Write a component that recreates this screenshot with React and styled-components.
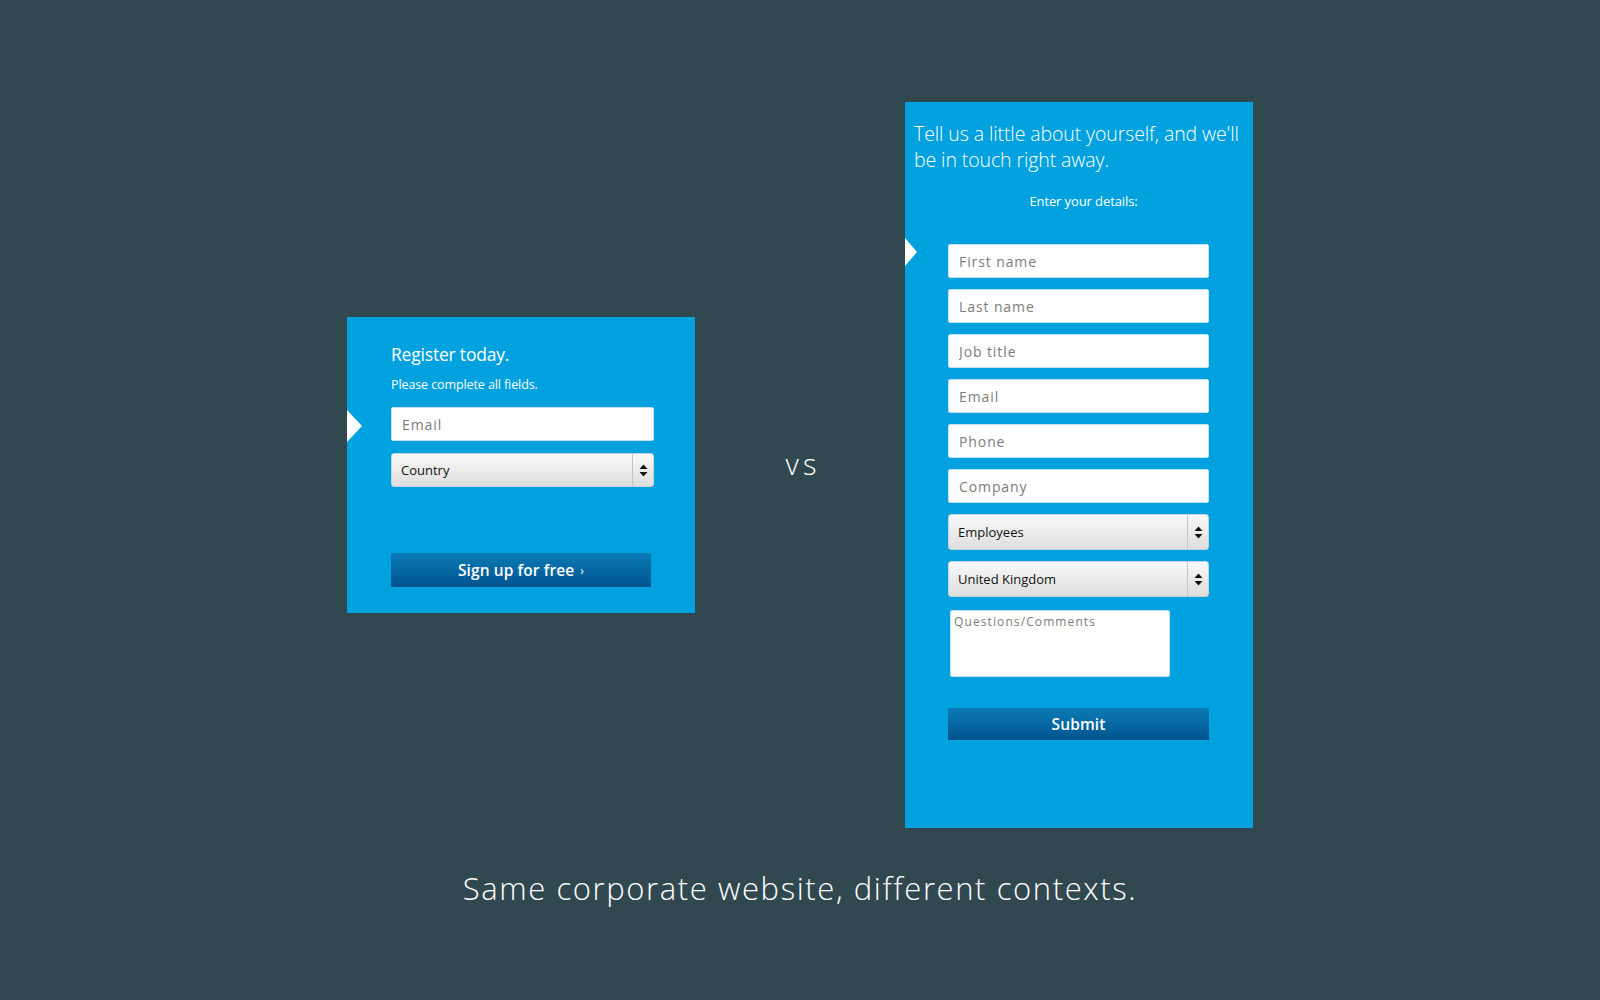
import React from "react";
import styled, { createGlobalStyle } from "styled-components";

const Global = createGlobalStyle`
  html, body { margin: 0; padding: 0; background: #324851; }
  body { font-family: "Open Sans", "Liberation Sans", sans-serif; }
  * { box-sizing: border-box; }
`;

const Page = styled.div`
  width: 1600px;
  height: 1000px;
  background: #324851;
  display: flex;
  flex-direction: column;
  align-items: center;
  padding-top: 102px;
`;

const Stage = styled.div`
  display: grid;
  grid-template-columns: 348px 210px 348px;
  align-items: center;
  height: 726px;
`;

const Panel = styled.div`
  position: relative;
  background: #00a1df;
  width: 348px;
  height: ${(p) => p.$h}px;
  padding: ${(p) => p.$pad};
  display: flex;
  flex-direction: column;
  color: #fff;
`;

const Pointer = styled.div`
  position: absolute;
  left: 0;
  top: ${(p) => p.$top}px;
  width: 0;
  height: 0;
  border-top: ${(p) => p.$h / 2}px solid transparent;
  border-bottom: ${(p) => p.$h / 2}px solid transparent;
  border-left: ${(p) => p.$w}px solid #fff;
`;

const Versus = styled.div`
  justify-self: center;
  font-family: "Open Sans", sans-serif;
  font-weight: 300;
  font-size: 29px;
  letter-spacing: 4px;
  color: #fff;
  padding: 0 0 4px 6px;
`;

const Title = styled.h2`
  margin: 0;
  font-weight: 400;
  font-size: 17.5px;
  line-height: 24px;
  letter-spacing: -0.2px;
`;

const Lead = styled.h2`
  margin: 0;
  font-weight: 300;
  font-size: 19.5px;
  line-height: 26px;
  letter-spacing: -0.1px;
`;

const Note = styled.p`
  margin: ${(p) => p.$m};
  font-size: ${(p) => p.$size || 12}px;
  line-height: 16px;
  text-align: ${(p) => (p.$center ? "center" : "left")};
  letter-spacing: -0.1px;
`;

const Fields = styled.div`
  display: flex;
  flex-direction: column;
  gap: ${(p) => p.$gap}px;
  width: ${(p) => p.$w}px;
  margin: ${(p) => p.$m};
`;

const Field = styled.input`
  display: block;
  width: 100%;
  height: ${(p) => p.$h || 34}px;
  border: 1px solid #bfe3f4;
  border-radius: 2px;
  background: #fff;
  padding: 0 10px;
  font-family: "Open Sans", sans-serif;
  font-size: 14px;
  letter-spacing: 0.9px;
  outline: none;
  &::placeholder { color: #7c7c7c; opacity: 1; }
`;

const SelectBox = styled.div`
  display: flex;
  align-items: stretch;
  width: 100%;
  height: ${(p) => p.$h || 34}px;
  border: 1px solid #c4d3da;
  border-radius: 3px;
  background: linear-gradient(#f9f9f9, #dedede);
  font-size: 13px;
  color: #111;
  overflow: hidden;
`;

const SelectLabel = styled.span`
  flex: 1;
  display: flex;
  align-items: center;
  padding-left: 9px;
  letter-spacing: 0px;
`;

const SelectArrows = styled.span`
  width: 21px;
  display: flex;
  align-items: center;
  justify-content: center;
  border-left: 1px solid #c3c3c3;
`;

const Notes = styled.textarea`
  display: block;
  width: 220px;
  height: 67px;
  margin: 2px 0 0 2px;
  border: 1px solid #bfe3f4;
  border-radius: 2px;
  padding: 2px 3px;
  resize: none;
  font-family: "Open Sans", sans-serif;
  font-size: 12px;
  letter-spacing: 1.1px;
  outline: none;
  &::placeholder { color: #7c7c7c; opacity: 1; }
`;

const Action = styled.button`
  display: flex;
  align-items: center;
  justify-content: center;
  gap: 6px;
  width: ${(p) => p.$w}px;
  height: ${(p) => p.$h}px;
  margin: ${(p) => p.$m};
  border: none;
  border-radius: 0;
  background: linear-gradient(#0b7bb6, #00548f);
  color: #fff;
  font-family: "Open Sans", sans-serif;
  font-weight: 600;
  font-size: 15.5px;
  letter-spacing: 0.1px;
  padding: 0;
`;

const Chevron = styled.span`
  font-size: 12px;
  font-weight: 400;
`;

const Caption = styled.p`
  margin: 40px 0 0;
  font-family: "Open Sans", sans-serif;
  font-weight: 300;
  font-size: 31px;
  line-height: 40px;
  letter-spacing: 1.6px;
  color: #fff;
`;

const Arrows = () => (
  <svg width="9" height="13" viewBox="0 0 9 13">
    <path d="M4.5 0.5 L8.5 5 L0.5 5 Z" fill="#111" />
    <path d="M4.5 12.5 L8.5 8 L0.5 8 Z" fill="#111" />
  </svg>
);

const Select = ({ label, h }) => (
  <SelectBox $h={h}>
    <SelectLabel>{label}</SelectLabel>
    <SelectArrows>
      <Arrows />
    </SelectArrows>
  </SelectBox>
);

export default function App() {
  return (
    <>
      <Global />
      <Page>
        <Stage>
          <Panel $h={296} $pad="25px 0 0 44px">
            <Pointer $top={93} $w={15} $h={32} />
            <Title>Register today.</Title>
            <Note $m="11px 0 0" $size={12.5}>Please complete all fields.</Note>
            <Fields $gap={12} $w={263} $m="14px 0 0">
              <Field placeholder="Email" />
              <Select label="Country" />
            </Fields>
            <Action $w={260} $h={34} $m="66px 0 0">
              Sign up for free <Chevron>›</Chevron>
            </Action>
          </Panel>

          <Versus>vs</Versus>

          <Panel $h={726} $pad="19px 0 0 9px">
            <Pointer $top={136} $w={12} $h={29} />
            <Lead>
              Tell us a little about yourself, and we'll
              <br />
              be in touch right away.
            </Lead>
            <Note $m="20px 0 0" $size={13} $center>
              Enter your details:
            </Note>
            <Fields $gap={11} $w={261} $m="35px 0 0 34px">
              <Field placeholder="First name" />
              <Field placeholder="Last name" />
              <Field placeholder="Job title" />
              <Field placeholder="Email" />
              <Field placeholder="Phone" />
              <Field placeholder="Company" />
              <Select label="Employees" h={36} />
              <Select label="United Kingdom" h={36} />
              <Notes placeholder="Questions/Comments" />
            </Fields>
            <Action $w={261} $h={32} $m="31px 0 0 34px">
              Submit
            </Action>
          </Panel>
        </Stage>
        <Caption>Same corporate website, different contexts.</Caption>
      </Page>
    </>
  );
}
